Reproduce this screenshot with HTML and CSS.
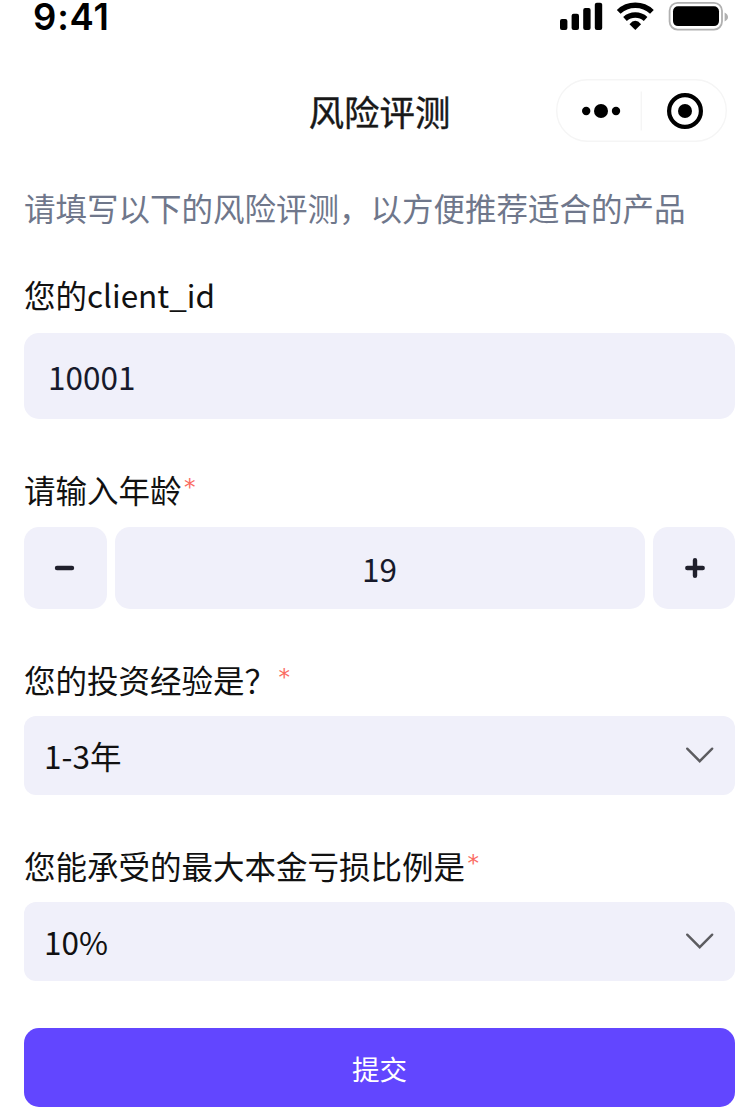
FILE: index.html
```html
<!DOCTYPE html>
<html lang="zh-CN">
<head>
<meta charset="utf-8">
<title>风险评测</title>
<link rel="stylesheet" href="styles.css">
</head>
<body>
<div class="page">
  <div class="status">
    <span class="time">9:41</span>
    <svg class="status-icons" width="172" height="34" viewBox="558 0 172 34">
      <rect x="560" y="19" width="7.4" height="11" rx="2"/>
      <rect x="571.6" y="13.8" width="7.4" height="16.2" rx="2"/>
      <rect x="583.2" y="8" width="7.4" height="22" rx="2"/>
      <rect x="594.8" y="2.8" width="7.4" height="27.2" rx="2"/>
      <g fill="none" stroke="#000" stroke-width="5.4">
        <path d="M618.7 11.9A24.2 24.2 0 0 1 651.9 11.9"/>
        <path d="M625 19A15.4 15.4 0 0 1 645.6 19"/>
      </g>
      <path d="M635.3 30L629.5 24.2Q635.3 17.4 641.1 24.2Z"/>
      <rect x="669.6" y="2.8" width="52.4" height="26.8" rx="8" fill="none" stroke="#b0b0b0" stroke-width="1.8"/>
      <rect x="673" y="6.3" width="46" height="19.8" rx="5"/>
      <path d="M724.6 12.4Q728 14 728 17T724.6 21.4Z" fill="#b0b0b0"/>
    </svg>
  </div>
  <header class="nav">
    <h1 class="title">风险评测</h1>
    <div class="capsule">
      <svg width="171" height="63" viewBox="556 79 171 63">
        <rect x="556.7" y="79.7" width="169.6" height="61.6" rx="30.8" fill="#fff" stroke="#f5f5f5" stroke-width="1.4"/>
        <path d="M641.3 91.5V130.5" stroke="#f5f5f5" stroke-width="1.4"/>
        <circle cx="586.2" cy="111" r="4.2"/>
        <circle cx="601" cy="111" r="7"/>
        <circle cx="616" cy="111" r="4.2"/>
        <circle cx="685" cy="111" r="15.9" fill="none" stroke="#000" stroke-width="4.2"/>
        <circle cx="685" cy="111" r="7"/>
      </svg>
    </div>
  </header>
  <p class="intro">请填写以下的风险评测，以方便推荐适合的产品</p>
  <form class="form">
    <div class="group group-id">
      <div class="label">您的client_id</div>
      <div class="field field-id">10001</div>
    </div>
    <div class="group group-age">
      <div class="label">请输入年龄<span class="req">*</span></div>
      <div class="stepper">
        <div class="step"><svg width="22" height="22" viewBox="0 0 22 22"><path d="M3 11H18"/></svg></div>
        <div class="field age">19</div>
        <div class="step"><svg width="22" height="22" viewBox="0 0 22 22"><path d="M4.3 11H19.7M12 3.2V18.8"/></svg></div>
      </div>
    </div>
    <div class="group group-exp">
      <div class="label">您的投资经验是？<span class="req">*</span></div>
      <div class="field select">1-3年<svg width="30" height="20" viewBox="0 0 30 20"><path d="M2.2 3.7L14.7 16.2L27.2 3.7"/></svg></div>
    </div>
    <div class="group group-loss">
      <div class="label">您能承受的最大本金亏损比例是<span class="req">*</span></div>
      <div class="field select">10%<svg width="30" height="20" viewBox="0 0 30 20"><path d="M2.2 3.7L14.7 16.2L27.2 3.7"/></svg></div>
    </div>
    <div class="submit">提交</div>
  </form>
</div>
</body>
</html>
```
FILE: styles.css
```css
* { box-sizing: border-box; }
body {
  margin: 0;
  background: #fff;
  color: #111;
  font-family: "Noto Sans CJK SC", sans-serif;
  font-size: 31.5px;
}
.page {
  padding: 0 3px 0 24px;
}
svg { display: block; }
.status {
  display: flex;
  justify-content: space-between;
  height: 34px;
  padding: 0 5px 0 9px;
}
.time {
  font: 600 36.5px/34px Inter, sans-serif;
  letter-spacing: 0.8px;
  color: #000;
}
.nav {
  display: grid;
  grid-template-columns: 1fr auto 1fr;
  align-items: center;
  height: 63px;
  margin-top: 45px;
}
.title {
  grid-column: 2;
  margin: 0;
  font-size: 35.4px;
  font-weight: 400;
  -webkit-text-stroke: 0.4px #181818;
  line-height: 62px;
  color: #181818;
}
.capsule {
  justify-self: end;
  padding-right: 8px;
}
.intro {
  margin: 41px 0 0;
  line-height: 48px;
  color: #6f778b;
  white-space: nowrap;
}
.form {
  display: flex;
  flex-direction: column;
  margin-top: 43px;
}
.group {
  display: flex;
  flex-direction: column;
}
.label {
  display: flex;
  line-height: 40px;
}
.req {
  margin-left: 2.5px;
  font-family: "DejaVu Sans", sans-serif;
  font-size: 23px;
  line-height: 37px;
  color: #fa6b62;
}
.field, .step {
  background: #f0f0fa;
  border-radius: 15px;
}
.field-id {
  height: 86px;
  margin-top: 19px;
  padding-left: 24px;
  line-height: 86px;
  color: #171a2b;
}
.group-age { margin-top: 50px; }
.stepper {
  display: flex;
  gap: 8px;
  height: 82.4px;
  margin-top: 18px;
}
.step {
  display: flex;
  align-items: center;
  justify-content: center;
  width: 82.5px;
}
.step path {
  fill: none;
  stroke: #20202c;
  stroke-width: 4.4;
  stroke-linecap: round;
}
.age {
  flex: 1;
  text-align: center;
  line-height: 83px;
  color: #171a2b;
}
.group-exp { margin-top: 49.2px; }
.select {
  display: flex;
  align-items: center;
  justify-content: space-between;
  height: 79px;
  margin-top: 17.6px;
  padding: 0 20px 1px;
  border-radius: 12px;
}
.select path {
  fill: none;
  stroke: #5c5c60;
  stroke-width: 2.4;
  stroke-linecap: round;
}
.group-loss { margin-top: 49.7px; }
.submit {
  height: 79px;
  margin-top: 47px;
  border-radius: 15px;
  background: #6246ff;
  color: #fff;
  font-size: 27.6px;
  line-height: 80px;
  text-align: center;
}
```
